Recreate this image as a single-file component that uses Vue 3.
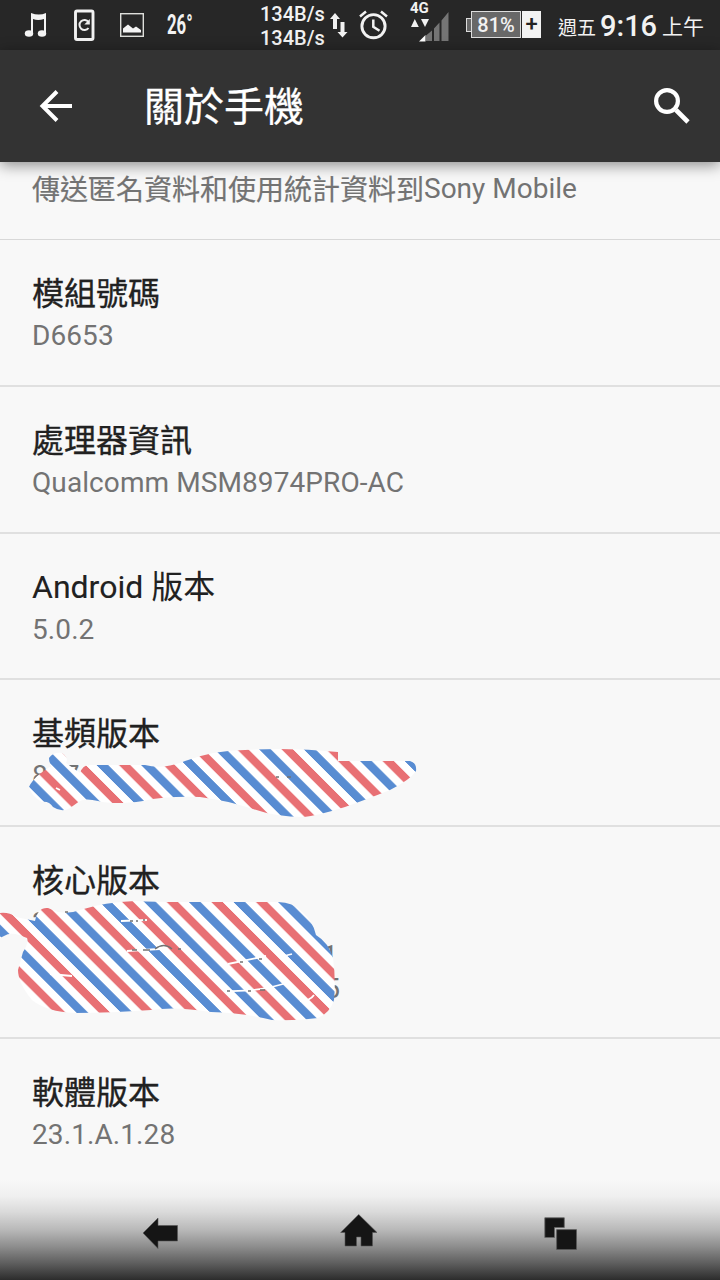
<script setup>
import { ref } from 'vue'

const title = ref('關於手機')
const usageText = ref('傳送匿名資料和使用統計資料到')

const items = ref([
  { key: 'model', title: '模組號碼', lines: ['D6653'] },
  { key: 'cpu', title: '處理器資訊', lines: ['Qualcomm MSM8974PRO-AC'] },
  { key: 'android', title: 'Android 版本', lines: ['5.0.2'], size: 'short' },
  { key: 'baseband', title: '基頻版本', lines: ['8974'] },
  { key: 'kernel', title: '核心版本', lines: ['3', '1', '5'], size: 'tall' },
  { key: 'build', title: '軟體版本', lines: ['23.1.A.1.28'], size: 'last' }
])
</script>

<template>
  <div class="phone">
    <header class="status">
      <svg class="status__note" width="24" height="26" viewBox="0 0 24 26">
        <path d="M7 1q8 3 15 0v20h-2V7q-6 2-11 0v14H7z" fill="#f4f4f4" />
        <ellipse cx="5" cy="21.500" rx="4.200" ry="3.300" fill="#f4f4f4" />
        <ellipse cx="18" cy="21.500" rx="4.200" ry="3.300" fill="#f4f4f4" />
      </svg>
      <svg class="status__device" width="22" height="32" viewBox="0 0 22 32">
        <rect x="1.500" y="2" width="17.500" height="28.500" rx="1.500" fill="none" stroke="#f2f2f2" stroke-width="2.900" />
        <path d="M14.500 19a5 5 0 1 1 0-6" fill="none" stroke="#eee" stroke-width="2" />
        <path d="M15.800 10v5.500h-5.500z" fill="#eee" />
      </svg>
      <svg class="status__image" width="24" height="24" viewBox="0 0 24 24">
        <rect x=".7" y=".7" width="22.600" height="22.600" fill="none" stroke="#dedfdb" stroke-width="1.400" />
        <path d="M3 19.500v-4l5-4 5 4 3-2 5 3.500v2.500z" fill="#f4f4f4" />
      </svg>
      <span class="status__temp">26°</span>
      <div class="status__speed">
        <span>134B/s</span>
        <span>134B/s</span>
      </div>
      <svg class="status__updown" width="18" height="26" viewBox="0 0 18 26">
        <path d="M5 1l5 6H7v10H3V7H0zM10.500 10h4v10h3l-5 5.500-5-5.500h3z" fill="#f2f2f2" />
      </svg>
      <svg class="status__alarm" width="30" height="30" viewBox="0 0 30 30">
        <circle cx="14.500" cy="16.200" r="11.600" fill="none" stroke="#f2f2f2" stroke-width="2.900" />
        <path d="M14.300 9.500v7.200l6.200 4M1 6.500l6-5M22 1.500l6 5" fill="none" stroke="#f2f2f2" stroke-width="2.500" />
      </svg>
      <div class="status__signal">
        <span class="status__net">4G</span>
        <svg width="40" height="32" viewBox="0 0 40 32">
          <path d="M1 16l3.800-8 4 8zM11 8h8l-4 8z" fill="#f2f2f2" />
          <path d="M16 24.500l6-5v10.500h-6zM24 17.500l5.500-6V30H24zM31.500 9.500L38.500 1v29h-7z" fill="#757575" />
          <path d="M9 30.500l6.500-6.500v6.500z" fill="#fff" />
        </svg>
      </div>
      <div class="battery">
        <span class="battery__tip" />
        <span class="battery__level">81%</span>
        <span class="battery__plus">+</span>
      </div>
      <span class="status__day">週五</span>
      <span class="status__time">9:16</span>
      <span class="status__ampm">上午</span>
    </header>

    <nav class="toolbar">
      <button class="toolbar__btn" type="button" aria-label="返回">
        <svg width="34" height="34" viewBox="0 0 34 34">
          <path d="M33 17H4M18 2.500L3.500 17 18 31.500" fill="none" stroke="#fff" stroke-width="4" />
        </svg>
      </button>
      <h1 class="toolbar__title">{{ title }}</h1>
      <button class="toolbar__btn" type="button" aria-label="搜尋">
        <svg width="38" height="38" viewBox="0 0 38 38">
          <circle cx="14" cy="14" r="10.900" fill="none" stroke="#fff" stroke-width="4.200" />
          <path d="M23 23l12 12" stroke="#fff" stroke-width="4.600" />
        </svg>
      </button>
    </nav>

    <main class="list">
      <section class="usage">
        <span class="usage__text">{{ usageText }}</span>
        <span>Sony Mobile</span>
      </section>
      <section
        v-for="item in items"
        :key="item.key"
        class="row"
        :class="[`row--${item.key}`, item.size ? `row--${item.size}` : '']"
      >
        <h2 class="row__title">{{ item.title }}</h2>
        <p v-for="line in item.lines" :key="line" class="row__line">{{ line }}</p>
      </section>
    </main>

    <svg class="scribble" width="430" height="290" viewBox="0 740 430 290">
      <defs>
        <pattern
          id="stripes"
          width="44.600"
          height="100"
          patternUnits="userSpaceOnUse"
          patternTransform="matrix(1 0 1 1 .4 0)"
        >
          <rect width="44.600" height="100" fill="#fff" />
          <rect width="11.700" height="100" fill="#588cd2" />
          <rect x="22.500" width="11.300" height="100" fill="#e87074" />
        </pattern>
      </defs>
      <path
        d="M49 758Q53 752 62 753Q69 758 66 763L80 773Q83 764 91 765H145Q163 770 185 761Q215 750 245 750Q290 747 338 752V761H410Q417 763 416 771Q410 780 390 790Q365 800 345 807Q320 815 304 817Q275 817 253 809Q225 800 200 797Q165 796 143 801Q115 805 98 801Q83 797 77 803L70 808Q62 813 53 807Q49 801 42 802Q31 796 29 787Q32 780 41 773L51 766Q49 762 49 758Z"
        fill="url(#stripes)"
      />
      <path
        d="M0 913Q9 912 16 917L35 921Q38 907 48 908L58 912Q70 914 80 910Q105 902 135 901Q155 902 180 902H278Q293 902 302 912Q313 921 316 935Q329 943 333 958Q336 980 334 1000Q330 1013 318 1018Q295 1021 272 1020Q245 1013 211 1012Q175 1006 151 1010Q110 1013 75 1013Q47 1012 32 1000Q18 983 18 970L23 952Q29 943 27 938L19 935Q10 932 4 936L0 938Z"
        fill="url(#stripes)"
      />
      <g fill="none" stroke="#fff" stroke-width="1.800">
        <path d="M121 921l26-1M127 951q15-1 33-2M50 974l22 2M228 964l38-8M284 956l8-2M226 991q35 1 63-9M300 1001q10 0 14-6M56 788l4 2" />
      </g>
      <g fill="none" stroke="#737373" stroke-width="1.400">
        <path d="M130 921h3M136 921h2M143 920h2M132 950h5M143 950h7M155 949q9-7 17 0M178 949h3M240 962h3M259 959h3M227 991h3M248 991h3M260 990h5M276 777h3M287 777h4M65 912h3" />
      </g>
    </svg>

    <footer class="navbar">
      <svg class="navbar__back" width="38" height="34" viewBox="0 0 38 34">
        <path d="M1 17L16 2v7.500h19.500v15.500H16v7.500z" fill="#151515" stroke="#555" stroke-width=".6" />
      </svg>
      <svg class="navbar__home" width="38" height="34" viewBox="0 0 38 34">
        <path d="M18.700 .5L37 18.500h-4.500v13.500H21v-9h-4.500v9H5V18.500H.7z" fill="#151515" stroke="#555" stroke-width=".6" />
      </svg>
      <svg class="navbar__recent" width="34" height="34" viewBox="0 0 34 34">
        <path d="M.8.800H20.300V10.500H10.500V20.500H.8z" fill="#151515" stroke="#666" stroke-width=".8" />
        <rect x="12.700" y="12.700" width="19.700" height="19.700" fill="#151515" stroke="#555" stroke-width=".8" />
      </svg>
    </footer>
  </div>
</template>

<style>
body {
  margin: 0;
}
</style>

<style scoped>
.phone {
  position: relative;
  width: 720px;
  height: 1280px;
  overflow: hidden;
  background: #f8f8f8;
  font-family: Roboto, 'Noto Sans CJK TC', sans-serif;
}

.status {
  display: flex;
  align-items: flex-start;
  height: 50px;
  background: #272727;
  color: #f2f2f2;
  line-height: 1;
  white-space: nowrap;
}

.status > * {
  flex-shrink: 0;
}

.status__note {
  margin: 12px 0 0 24px;
}

.status__device {
  margin: 9px 0 0 26px;
}

.status__image {
  margin: 13px 0 0 24px;
}

.status__temp {
  width: 38px;
  margin: 12px 0 0 23px;
  font-size: 27px;
  font-weight: 700;
  transform: scaleX(0.62);
  transform-origin: 0 0;
}

.status__speed {
  display: flex;
  flex-direction: column;
  width: 68px;
  margin: 3px 0 0 55px;
  font-size: 20px;
  font-weight: 500;
  line-height: 23.5px;
}

.status__updown {
  margin: 12px 0 0 2px;
}

.status__alarm {
  margin: 10px 0 0 11px;
}

.status__signal {
  display: flex;
  flex-direction: column;
  width: 40px;
  margin: 1px 0 0 21px;
}

.status__net {
  height: 10px;
  font-size: 15px;
  font-weight: 700;
}

.battery {
  display: flex;
  width: 75px;
  height: 27px;
  margin: 11px 0 0 16px;
}

.battery__tip {
  box-sizing: border-box;
  width: 5px;
  height: 14px;
  margin-top: 7px;
  border: 1.5px solid #ddd;
  border-right: 0;
  background: #686868;
}

.battery__level {
  box-sizing: border-box;
  width: 50px;
  border: 1.5px solid #ddd;
  background: #686868;
  font-size: 20px;
  font-weight: 500;
  line-height: 26px;
  text-align: center;
}

.battery__plus {
  width: 19px;
  margin-left: 1px;
  background: #f2f2f2;
  color: #222;
  font-size: 22px;
  font-weight: 500;
  line-height: 26px;
  text-align: center;
}

.status__day {
  width: 38px;
  margin: 19px 0 0 17px;
  font-size: 19px;
}

.status__time {
  width: 58px;
  margin: 12px 0 0 4px;
  font-size: 29px;
  font-weight: 500;
}

.status__ampm {
  margin: 17px 0 0 4px;
  font-size: 21px;
}

.toolbar {
  position: relative;
  z-index: 1;
  display: flex;
  align-items: center;
  box-sizing: border-box;
  height: 112px;
  padding: 0 29px 0 39px;
  background: #333;
  box-shadow: 0 3px 14px rgba(0, 0, 0, 0.45);
}

.toolbar__btn {
  display: flex;
  padding: 0;
  border: 0;
  background: none;
}

.toolbar__title {
  flex: 1;
  margin: 4px 0 0 71px;
  color: #fff;
  font-size: 40px;
  font-weight: 400;
  line-height: 56px;
  -webkit-text-stroke: 0.3px #fff;
}

.usage {
  display: flex;
  box-sizing: border-box;
  height: 78px;
  padding: 7px 32px 0;
  border-bottom: 1px solid #d8d8d8;
  color: #737373;
  font-size: 28px;
  line-height: 40px;
}

.usage__text {
  padding-top: 2px;
  -webkit-text-stroke: 0.2px #737373;
}

.row {
  box-sizing: border-box;
  height: 147px;
  padding: 33px 32px 0;
  border-bottom: 2px solid #e0e0e0;
}

.row--short {
  height: 146px;
  padding-top: 32px;
}

.row--tall {
  height: 212px;
}

.row--last {
  border-bottom: 0;
}

.row__title {
  margin: 0;
  color: #212121;
  font-size: 32px;
  font-weight: 400;
  line-height: 42px;
  -webkit-text-stroke: 0.35px #212121;
}

.row--short .row__title {
  margin-bottom: 1px;
  -webkit-text-stroke-width: 0.1px;
}

.row__line {
  margin: 0;
  color: #737373;
  font-size: 28px;
  line-height: 42px;
  letter-spacing: 0.09px;
}

.row--kernel .row__title {
  margin-bottom: 4px;
}

.row--kernel .row__line {
  width: 308px;
  line-height: 33px;
}

.row--kernel .row__line:nth-child(3) {
  width: 306px;
  text-align: right;
}

.row--kernel .row__line:nth-child(4) {
  text-align: right;
}

.scribble {
  position: absolute;
  top: 740px;
  left: 0;
}

.navbar {
  position: absolute;
  right: 0;
  bottom: 0;
  left: 0;
  display: flex;
  align-items: flex-start;
  box-sizing: border-box;
  height: 100px;
  padding: 34px 0 0 142px;
  background: linear-gradient(
    #f8f8f8 0,
    #f0f0f0 16px,
    #dadada 32px,
    #b8b8b8 50px,
    #8c8c8c 67px,
    #5c5c5c 84px,
    #2c2c2c 100px
  );
}

.navbar__back {
  margin-top: 2px;
}

.navbar__home {
  margin-left: 160px;
}

.navbar__recent {
  margin: 3px 0 0 166px;
}
</style>
